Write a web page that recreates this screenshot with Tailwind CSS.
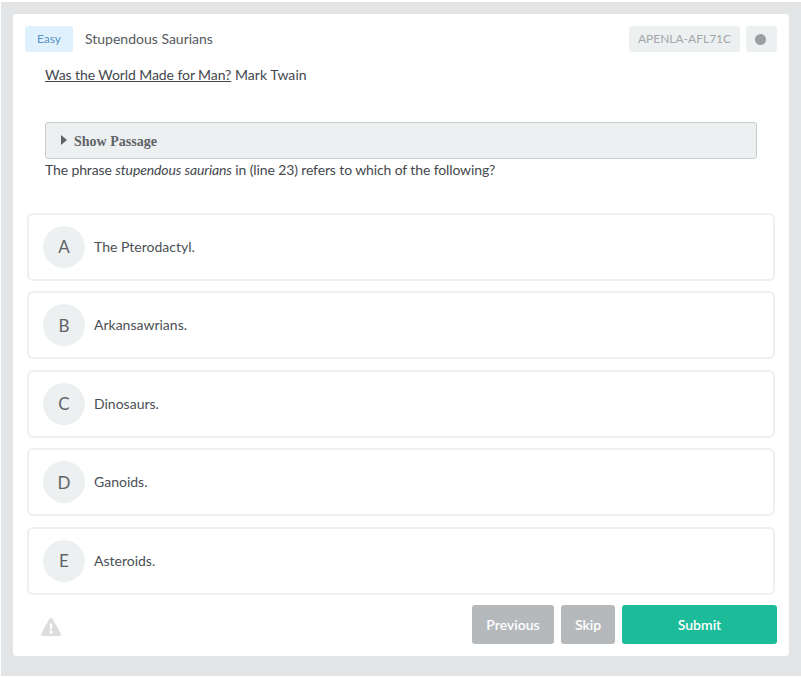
<!DOCTYPE html>
<html lang="en">
<head>
  <meta charset="UTF-8" />
  <title>Question</title>
  <script src="https://cdn.jsdelivr.net/npm/@tailwindcss/browser@4"></script>
</head>
<body class="bg-white font-['Lato',sans-serif] text-[#4a4f55]">

  <div class="mt-[2px] ml-px h-[674px] bg-[#e3e4e6] pt-3 pl-3 pr-3">
    <div class="h-[642px] w-[776px] rounded-[3px] bg-white pt-3 pl-3 pr-3 flex flex-col">

      <!-- Header -->
      <div class="flex items-center h-[26px]">
        <span class="w-12 h-[26px] flex items-center justify-center rounded-[3px] bg-[#def1fc] text-[#5b93c4] text-xs">Easy</span>
        <span class="ml-3 text-sm text-[#555a60]">Stupendous Saurians</span>
        <span class="ml-auto w-[111px] h-[26px] flex items-center justify-center rounded-[3px] bg-[#edf0f1] text-[#a3a7ab] text-xs">APENLA-AFL71C</span>
        <span class="ml-1.5 w-[31px] h-[26px] flex items-center pl-[9px] rounded-[3px] bg-[#edf0f1]">
          <span class="w-[11px] h-[11px] rounded-full bg-[#9a9ea3]"></span>
        </span>
      </div>

      <!-- Passage -->
      <div class="ml-5 w-[712px]">
        <p class="mt-[14px] text-sm leading-[18px] tracking-[0.05px] text-[#44484d]"><span class="underline tracking-[-0.08px]">Was the World Made for Man?</span> Mark Twain</p>
        <div class="mt-[38px] h-[37px] flex items-center rounded-[3px] border border-[#c9cccd] bg-[#edf0f1] pl-[15px]">
          <svg width="6" height="10" viewBox="0 0 6 10" class="mr-[7px] mb-0.5"><path d="M0 0 L6 5 L0 10 Z" fill="#5f6368"/></svg>
          <span class="pt-0.5 font-['Liberation_Serif',serif] font-bold text-sm text-[#5f6368]">Show Passage</span>
        </div>
        <p class="mt-px text-sm leading-[20px] tracking-[-0.12px] text-[#44484d]">The phrase <em>stupendous saurians</em> in (line 23) refers to which of the following?</p>
      </div>

      <!-- Options -->
      <div class="mt-[32.9px] ml-0.5 w-[748px] flex flex-col gap-[10.5px]">
        <div class="h-[68px] flex items-center rounded-md border-2 border-[#edf0f1] pl-3.5">
          <span class="w-[42px] h-[42px] flex items-center justify-center rounded-full bg-[#edf0f1] text-[#5f6368] text-[17px]">A</span>
          <span class="ml-[9px] text-sm text-[#4a4f55]">The Pterodactyl.</span>
        </div>
        <div class="h-[68px] flex items-center rounded-md border-2 border-[#edf0f1] pl-3.5">
          <span class="w-[42px] h-[42px] flex items-center justify-center rounded-full bg-[#edf0f1] text-[#5f6368] text-[17px]">B</span>
          <span class="ml-[9px] text-sm text-[#4a4f55]">Arkansawrians.</span>
        </div>
        <div class="h-[68px] flex items-center rounded-md border-2 border-[#edf0f1] pl-3.5">
          <span class="w-[42px] h-[42px] flex items-center justify-center rounded-full bg-[#edf0f1] text-[#5f6368] text-[17px]">C</span>
          <span class="ml-[9px] text-sm text-[#4a4f55]">Dinosaurs.</span>
        </div>
        <div class="h-[68px] flex items-center rounded-md border-2 border-[#edf0f1] pl-3.5">
          <span class="w-[42px] h-[42px] flex items-center justify-center rounded-full bg-[#edf0f1] text-[#5f6368] text-[17px]">D</span>
          <span class="ml-[9px] text-sm text-[#4a4f55]">Ganoids.</span>
        </div>
        <div class="h-[68px] flex items-center rounded-md border-2 border-[#edf0f1] pl-3.5">
          <span class="w-[42px] h-[42px] flex items-center justify-center rounded-full bg-[#edf0f1] text-[#5f6368] text-[17px]">E</span>
          <span class="ml-[9px] text-sm text-[#4a4f55]">Asteroids.</span>
        </div>
      </div>

      <!-- Footer -->
      <div class="mt-[10.1px] flex items-center h-[39px]">
        <svg width="20" height="18" viewBox="0 0 20 18" class="ml-[16px] mt-[5px]">
          <path fill-rule="evenodd" fill="#dcdddf" d="M10 0 C10.7 0 11.3 .4 11.7 1 L19.7 15.2 C20.4 16.5 19.5 18 18 18 L2 18 C.5 18 -.4 16.5 .3 15.2 L8.3 1 C8.7 .4 9.3 0 10 0 Z M8.8 5.5 L9.1 11.5 L10.9 11.5 L11.2 5.5 Z M10 12.6 A1.6 1.6 0 1 0 10 15.8 A1.6 1.6 0 1 0 10 12.6 Z"/>
        </svg>
        <div class="ml-auto flex gap-[7px]">
          <button class="w-[82px] h-[39px] pt-0.5 rounded-[3px] bg-[#b6b9bc] text-white text-sm font-semibold">Previous</button>
          <button class="w-[54px] h-[39px] pt-0.5 rounded-[3px] bg-[#b6b9bc] text-white text-sm font-semibold">Skip</button>
          <button class="w-[155px] h-[39px] pt-0.5 rounded-[3px] bg-[#1cbc9a] text-white text-sm font-semibold">Submit</button>
        </div>
      </div>

    </div>
  </div>
</body>
</html>
